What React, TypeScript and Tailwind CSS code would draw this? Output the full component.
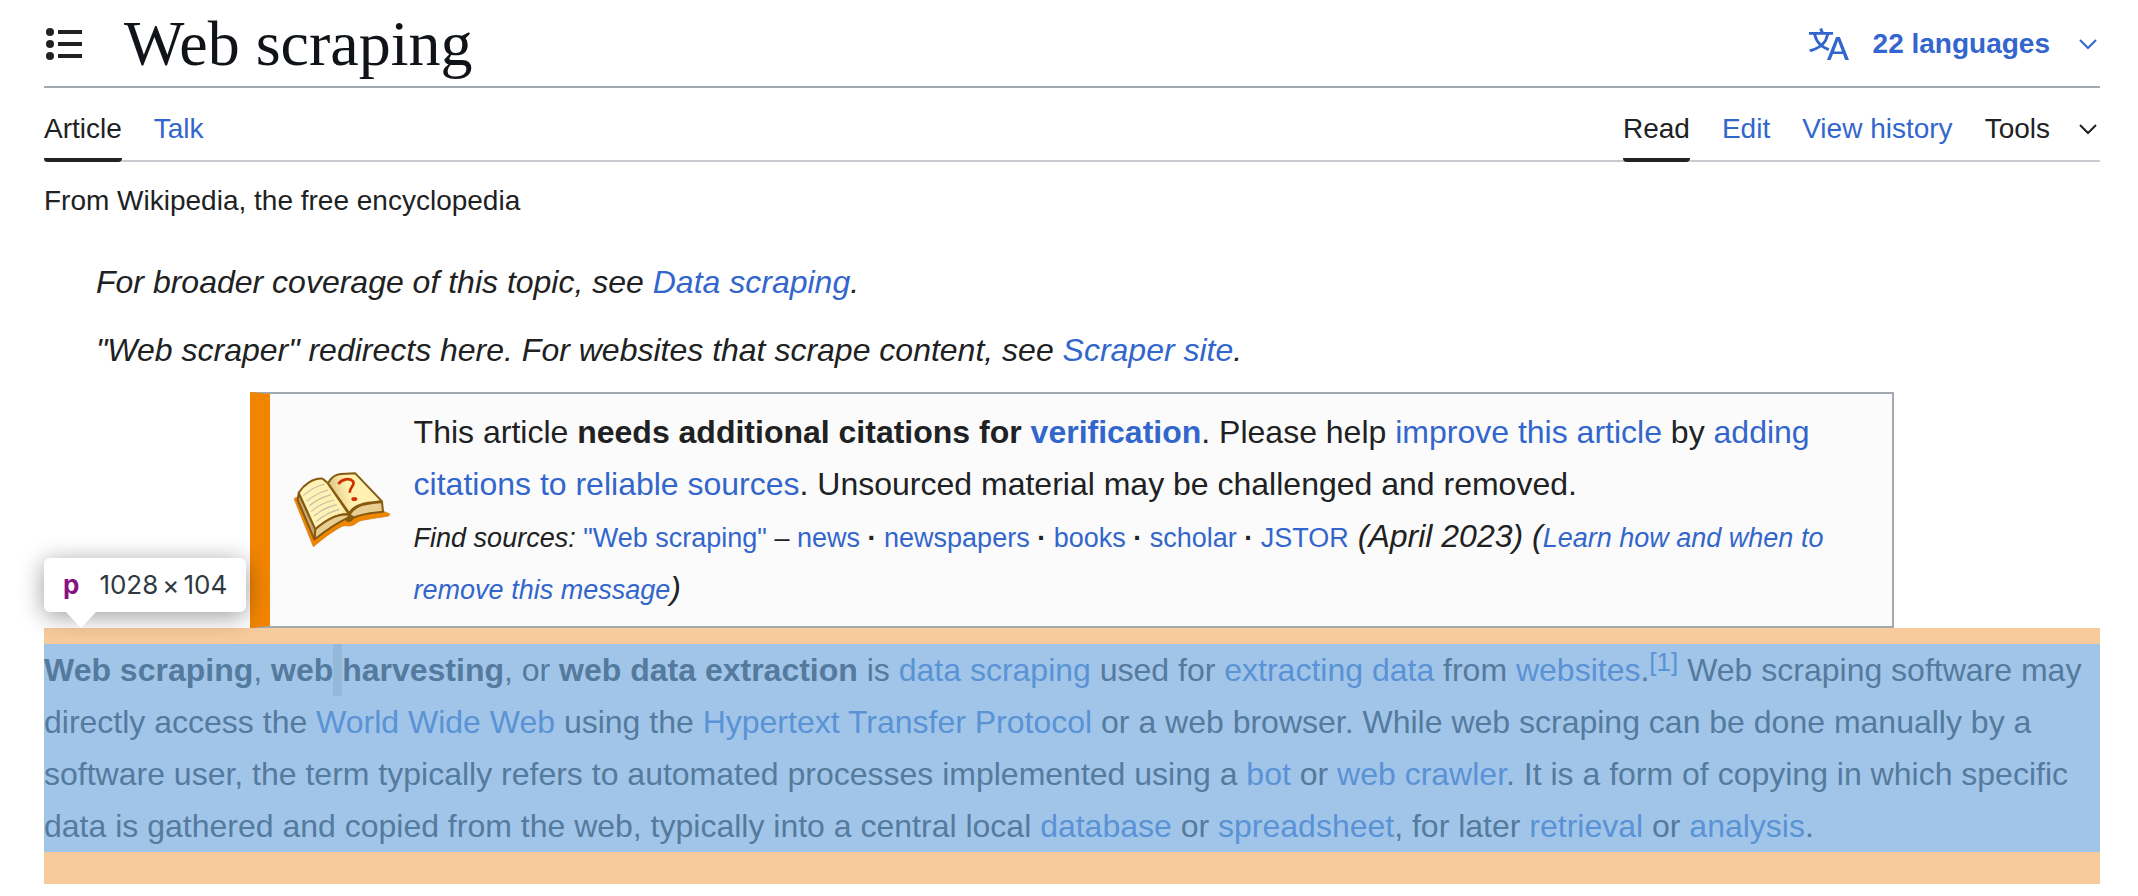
import React from "react"

interface LinkProps {
  children: React.ReactNode
  className?: string
}

function Link({ children, className = "text-[#3366cc]" }: LinkProps) {
  return (
    <a href="#" className={className}>
      {children}
    </a>
  )
}

function ListIcon() {
  return (
    <svg width="40" height="40" viewBox="0 0 40 40" fill="#202122" aria-hidden="true">
      <circle cx="6" cy="8" r="4" />
      <circle cx="6" cy="20" r="4" />
      <circle cx="6" cy="32" r="4" />
      <path d="M14 6h24v4H14zM14 18h24v4H14zM14 30h24v4H14z" />
    </svg>
  )
}

function LanguageIcon() {
  return (
    <svg width="40" height="40" viewBox="0 0 20 20" fill="currentColor" aria-hidden="true">
      <path d="M20 18h-1.44a.6.6 0 0 1-.4-.12.8.8 0 0 1-.23-.31L17 15h-5l-1 2.54a.8.8 0 0 1-.22.3.6.6 0 0 1-.4.14H9l4.55-11.47h1.89zm-3.53-4.31L14.89 9.5a12 12 0 0 1-.39-1.24q-.09.37-.19.69l-.19.56-1.58 4.19zm-6.3-1.58a13.4 13.4 0 0 1-2.91-1.41 11.46 11.46 0 0 0 2.81-5.37H12V4H7.31a4 4 0 0 0-.2-.56C6.87 2.79 6.6 2 6.6 2l-1.47.5s.4.89.6 1.5H0v1.33h2.15A11.23 11.23 0 0 0 5 10.7a17.2 17.2 0 0 1-5 2.1q.56.82.87 1.38a23.3 23.3 0 0 0 5.22-2.51 15.6 15.6 0 0 0 3.56 1.77zM3.63 5.33h4.91a8.1 8.1 0 0 1-2.45 4.45 9.1 9.1 0 0 1-2.46-4.45" />
    </svg>
  )
}

function ChevronIcon() {
  return (
    <svg width="24" height="12" viewBox="0 0 24 12" fill="none" stroke="currentColor" strokeWidth="2" aria-hidden="true">
      <path d="M4 2l8 8 8-8" />
    </svg>
  )
}

function BookIcon() {
  return (
    <svg width="100" height="80" viewBox="36 60 300 240" className="shrink-0" aria-hidden="true">
      <defs>
        <linearGradient id="leftPage" x1="0" y1="0.3" x2="1" y2="0">
          <stop offset="0" stopColor="#fff3b8" />
          <stop offset="0.7" stopColor="#fff0b0" />
          <stop offset="1" stopColor="#d9bf80" />
        </linearGradient>
        <linearGradient id="rightPage" x1="0" y1="0.4" x2="1" y2="0.2">
          <stop offset="0" stopColor="#d9bf80" />
          <stop offset="0.35" stopColor="#fff0ae" />
          <stop offset="1" stopColor="#fff2b4" />
        </linearGradient>
      </defs>
      <path d="M42 146l12-6 52 118 100-60 100-16 24 10-4 6c-36 6-66 10-84 14-12 4-16 14-34 16-10 0-16-2-24 2-32 18-52 34-84 60z" fill="#f08500" stroke="#cf7a16" strokeWidth="2" />
      <path d="M56 130l-3 20 50 118 4-30z" fill="#c8a868" stroke="#85590f" strokeWidth="6" strokeLinejoin="round" />
      <path d="M56 128c14-22 42-44 72-42l16 14 62 92c-34-2-68 18-100 46z" fill="url(#leftPage)" stroke="#85590f" strokeWidth="6" strokeLinejoin="round" />
      <path d="M144 100c8-16 18-26 38-28l44-2 80 84c-40 4-84 6-98 36z" fill="url(#rightPage)" stroke="#85590f" strokeWidth="6" strokeLinejoin="round" />
      <path d="M106 238c34-30 66-48 100-44v8c-34 16-62 34-102 66z" fill="#e8ce92" stroke="#85590f" strokeWidth="6" strokeLinejoin="round" />
      <path d="M208 194c20-34 62-34 98-38l3 29c-34 4-66 6-88 18z" fill="#e8ce92" stroke="#85590f" strokeWidth="6" strokeLinejoin="round" />
      <path d="M196 208c2-8 18-10 26-6 0 12-22 22-26 6z" fill="#85590f" />
      <g fill="none" stroke="#c4bda6" strokeWidth="3.500">
        <path d="M70 136c18-16 36-26 64-34M80 154c18-16 36-26 64-34M88 168c18-16 36-26 66-34M94 184c18-16 36-26 68-34M102 198c18-16 36-26 68-34M110 214c18-16 36-28 68-36" />
      </g>
      <path d="M175 102c10-14 34-20 44-8 8 12-10 16-10 34" fill="none" stroke="#d03000" strokeWidth="8" />
      <ellipse cx="223" cy="147" rx="9" ry="6" fill="#d03000" />
    </svg>
  )
}

function TitleBar() {
  return (
    <header className="flex h-[88px] items-center justify-between border-b-2 border-[#a2a9b1] pt-0.5">
      <div className="flex items-center gap-10">
        <button type="button" aria-label="Contents">
          <ListIcon />
        </button>
        <h1 className="font-['Liberation_Serif',serif] text-[64px] leading-[80px] text-[#101418]">Web scraping</h1>
      </div>
      <button type="button" className="flex items-center text-[28px] font-bold text-[#3366cc]">
        <LanguageIcon />
        <span className="mr-[26px] ml-6">22 languages</span>
        <ChevronIcon />
      </button>
    </header>
  )
}

const tabClass = "flex h-[74px] items-center pt-2"
const activeTabClass = "relative text-[#202122] after:absolute after:inset-x-0 after:bottom-0 after:h-1 after:rounded-b after:bg-[#202122]"

function Tabs() {
  return (
    <nav className="flex justify-between border-b-2 border-[#c8ccd1] text-[28px]">
      <div className="-mb-0.5 flex gap-8">
        <Link className={`${tabClass} ${activeTabClass}`}>Article</Link>
        <Link className={`${tabClass} text-[#3366cc]`}>Talk</Link>
      </div>
      <div className="-mb-0.5 flex gap-8">
        <Link className={`${tabClass} ${activeTabClass}`}>Read</Link>
        <Link className={`${tabClass} text-[#3366cc]`}>Edit</Link>
        <Link className={`${tabClass} text-[#3366cc]`}>View history</Link>
        <button type="button" className={`${tabClass} gap-[26px]`}>
          Tools
          <ChevronIcon />
        </button>
      </div>
    </nav>
  )
}

function CitationNotice() {
  return (
    <aside className="mx-[10%] mt-4 flex items-center gap-[22px] border-2 border-l-[20px] border-[#a2a9b1] border-l-[#f28500] bg-[#fbfbfb] py-3 pr-4 pl-[22px]">
      <BookIcon />
      <div>
        This article{" "}
        <b>
          needs additional citations for <Link>verification</Link>
        </b>
        . Please help <Link>improve this article</Link> by <Link>adding citations to reliable sources</Link>. Unsourced
        material may be challenged and removed.
        <br />
        <span className="text-[27px] leading-none">
          <i>Find sources:</i> <Link>"Web scraping"</Link> – <Link>news</Link> <b>·</b> <Link>newspapers</Link> <b>·</b>{" "}
          <Link>books</Link> <b>·</b> <Link>scholar</Link> <b>·</b> <Link>JSTOR</Link>
        </span>{" "}
        <i>
          (April 2023) (<Link className="text-[27px] leading-none text-[#3366cc]">Learn how and when to remove this message</Link>)
        </i>
      </div>
    </aside>
  )
}

function InspectTooltip() {
  return (
    <div className="absolute bottom-full left-0 mb-4 flex h-[54px] items-center gap-5 rounded-md bg-white px-[19px] font-[Inter,sans-serif] text-[26px] whitespace-nowrap text-[#303942] shadow-[0_4px_24px_rgba(0,0,0,0.4)]">
      <b className="text-[#881280]">p</b>
      <span className="flex items-center gap-1">
        1028<span>×</span>104
      </span>
      <svg width="30" height="16" viewBox="0 0 30 16" className="absolute top-full left-[22px]" aria-hidden="true">
        <path d="M0 0h30L15 16z" fill="#fff" />
      </svg>
    </div>
  )
}

// Paragraph under the element inspector, with its margin area tinted orange
function InspectedParagraph() {
  const link = "text-[#5a92d6]"
  return (
    <div className="relative bg-[#f7cb9c] pt-4 pb-8">
      <p className="bg-[#a1c5e8] text-[#547a9d]">
        <b>Web scraping</b>,{" "}
        <b>
          web<span className="inline-block bg-[#93b8da] whitespace-pre"> </span>harvesting
        </b>
        , or <b>web data extraction</b> is <Link className={link}>data scraping</Link> used for{" "}
        <Link className={link}>extracting data</Link> from <Link className={link}>websites</Link>.
        <sup className="-top-2.5 text-[26px] leading-none">
          <Link className={link}>[1]</Link>
        </sup>{" "}
        Web scraping software may directly access the <Link className={link}>World Wide Web</Link> using the{" "}
        <Link className={link}>Hypertext Transfer Protocol</Link> or a web browser. While web scraping can be done
        manually by a software user, the term typically refers to automated processes implemented using a{" "}
        <Link className={link}>bot</Link> or <Link className={link}>web crawler</Link>. It is a form of copying in which
        specific data is gathered and copied from the web, typically into a central local{" "}
        <Link className={link}>database</Link> or <Link className={link}>spreadsheet</Link>, for later{" "}
        <Link className={link}>retrieval</Link> or <Link className={link}>analysis</Link>.
      </p>
      <InspectTooltip />
    </div>
  )
}

export default function App() {
  return (
    <div className="min-h-screen bg-white pr-[38px] pl-11 font-['Liberation_Sans',Arial,sans-serif] text-[32px] leading-[52px] text-[#202122]">
      <TitleBar />
      <Tabs />
      <p className="pt-4 text-[28px] leading-[46px]">From Wikipedia, the free encyclopedia</p>
      <div className="mt-8 space-y-4 pl-[52px] italic">
        <p>
          For broader coverage of this topic, see <Link>Data scraping</Link>.
        </p>
        <p>
          "Web scraper" redirects here. For websites that scrape content, see <Link>Scraper site</Link>.
        </p>
      </div>
      <CitationNotice />
      <InspectedParagraph />
    </div>
  )
}
